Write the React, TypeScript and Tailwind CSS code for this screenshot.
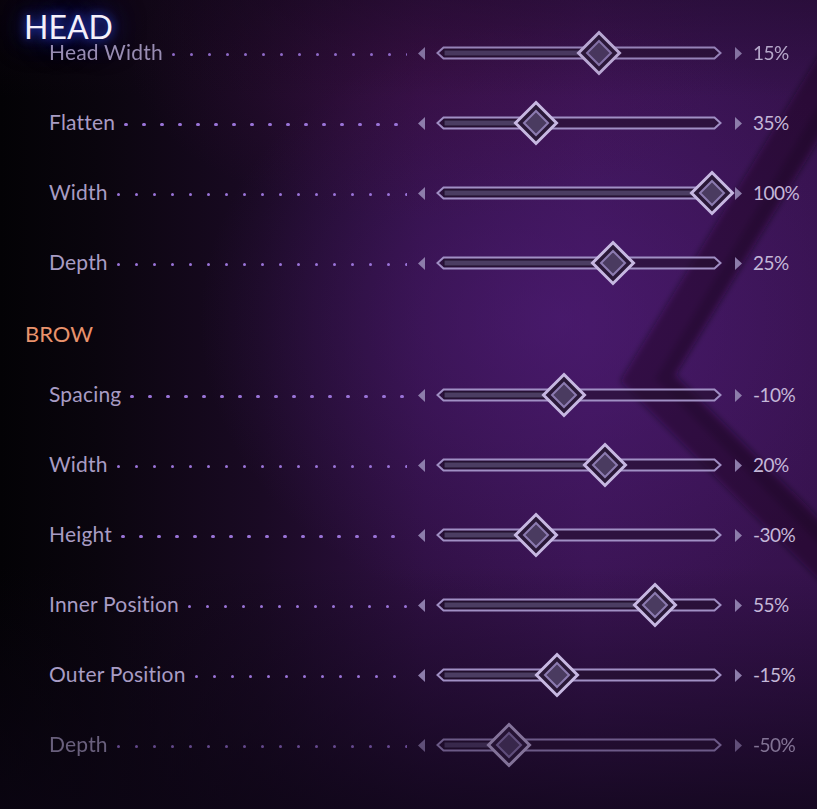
import React from "react";

type RowData = { label: string; value: string; pos: number; dim?: string };

const head: RowData[] = [
  { label: "Head Width", value: "15%", pos: 599, dim: "opacity-90" },
  { label: "Flatten", value: "35%", pos: 536 },
  { label: "Width", value: "100%", pos: 712 },
  { label: "Depth", value: "25%", pos: 613 },
];

const brow: RowData[] = [
  { label: "Spacing", value: "-10%", pos: 564 },
  { label: "Width", value: "20%", pos: 605 },
  { label: "Height", value: "-30%", pos: 536 },
  { label: "Inner Position", value: "55%", pos: 655 },
  { label: "Outer Position", value: "-15%", pos: 557 },
  { label: "Depth", value: "-50%", pos: 509, dim: "opacity-60" },
];

const TRACK_LEFT = 436;

function Dots() {
  return (
    <div className="flex-1 min-w-0 h-[6px] overflow-hidden flex items-center gap-[14.5px] ml-[9px] mt-[3px]">
      {Array.from({ length: 26 }).map((_, i) => (
        <span key={i} className="shrink-0 w-[3.5px] h-[3.5px] rounded-full bg-[#9a74d8]" />
      ))}
    </div>
  );
}

function Thumb() {
  return (
    <svg width="46" height="46" viewBox="0 0 46 46">
      <polygon points="23,2.5 43.5,23 23,43.5 2.5,23" fill="#2a1838" stroke="#c7b8e2" strokeWidth="3" />
      <polygon points="23,11 35,23 23,35 11,23" fill="#4a3b60" stroke="#8c7bb0" strokeWidth="2" />
    </svg>
  );
}

function Slider({ pos }: { pos: number }) {
  const fill = pos - TRACK_LEFT;
  return (
    <div className="relative w-[286px] h-[14px] ml-[11px] shrink-0">
      <svg width="286" height="14" viewBox="0 0 286 14" className="block">
        <polygon points="1.5,7 7.5,1.5 278.5,1.5 284.5,7 278.5,12.5 7.5,12.5" fill="#24102f" fillOpacity="0.6" stroke="#a08fc4" strokeWidth="2" />
        <rect x="8" y="4" width={Math.max(0, fill - 8)} height="6" fill="#4b3d62" stroke="#1e0f28" strokeWidth="1" />
      </svg>
      <div className="absolute top-[-16px]" style={{ left: fill - 23 }}>
        <Thumb />
      </div>
    </div>
  );
}

function Row({ label, value, pos, dim }: RowData) {
  return (
    <div className={`flex items-center h-[70px] ${dim ?? ""}`}>
      <div className="w-[407px] shrink-0 flex items-center pl-[49px]">
        <span className="text-[21px] leading-[28px] text-[#a89cc4] whitespace-nowrap mt-[-3px] tracking-[0.2px]">{label}</span>
        <Dots />
      </div>
      <svg width="7" height="13" viewBox="0 0 7 13" className="ml-[11px] shrink-0">
        <polygon points="7,0 0,6.5 7,13" fill="#8d7dab" />
      </svg>
      <Slider pos={pos} />
      <svg width="7" height="13" viewBox="0 0 7 13" className="ml-[13px] shrink-0">
        <polygon points="0,0 7,6.5 0,13" fill="#8d7dab" />
      </svg>
      <span className="ml-[11px] text-[19px] leading-[24px] tracking-[-0.5px] text-[#c4b8d8] whitespace-nowrap">{value}</span>
    </div>
  );
}

export default function App() {
  return (
    <div className="relative w-[817px] h-[809px] overflow-hidden bg-[#0a0510] font-['Lato','Open_Sans',sans-serif]">
      <div className="absolute inset-0 bg-[linear-gradient(90deg,#030205_0%,#0a050e_12%,#1a0a24_32%,#2f1043_52%,#3a1453_72%,#36124d_100%)]" />
      <div className="absolute inset-0 bg-[radial-gradient(ellipse_360px_300px_at_560px_320px,rgba(84,30,128,0.55),transparent)]" />
      <div className="absolute inset-0 bg-[radial-gradient(ellipse_300px_160px_at_430px_60px,rgba(70,14,70,0.35),transparent)]" />
      <svg className="absolute inset-0" width="817" height="809" viewBox="0 0 817 809">
        <defs>
          <filter id="soft" x="-20%" y="-20%" width="140%" height="140%">
            <feGaussianBlur stdDeviation="3" />
          </filter>
        </defs>
        <polyline points="860,30 648,378 860,590" fill="none" stroke="#17061f" strokeOpacity="0.42" strokeWidth="44" strokeLinejoin="miter" filter="url(#soft)" />
        <polyline points="860,50 664,378 860,575" fill="none" stroke="#12041a" strokeOpacity="0.15" strokeWidth="14" filter="url(#soft)" />
      </svg>
      <div className="absolute inset-0 bg-[linear-gradient(180deg,transparent_70%,rgba(12,5,20,0.75)_100%)]" />
      <div className="absolute inset-0 bg-[linear-gradient(180deg,rgba(20,6,26,0.35)_0%,transparent_12%)]" />

      <div className="relative flex flex-col">
        <div className="h-[18px] relative">
          <span className="absolute left-[24px] top-[11px] text-[32px] leading-none text-[#f4f0fa] [text-shadow:0_0_10px_#2a40d8,0_0_22px_#1c2c9c,0_0_34px_#152070]">
            HEAD
          </span>
        </div>
        {head.map((r, i) => (
          <Row key={"h" + i} {...r} />
        ))}
        <div className="h-[62px] flex items-center pl-[25px]">
          <span className="text-[22px] leading-[28px] text-[#e9926c] mt-[10px]">BROW</span>
        </div>
        {brow.map((r, i) => (
          <Row key={"b" + i} {...r} />
        ))}
      </div>
    </div>
  );
}
